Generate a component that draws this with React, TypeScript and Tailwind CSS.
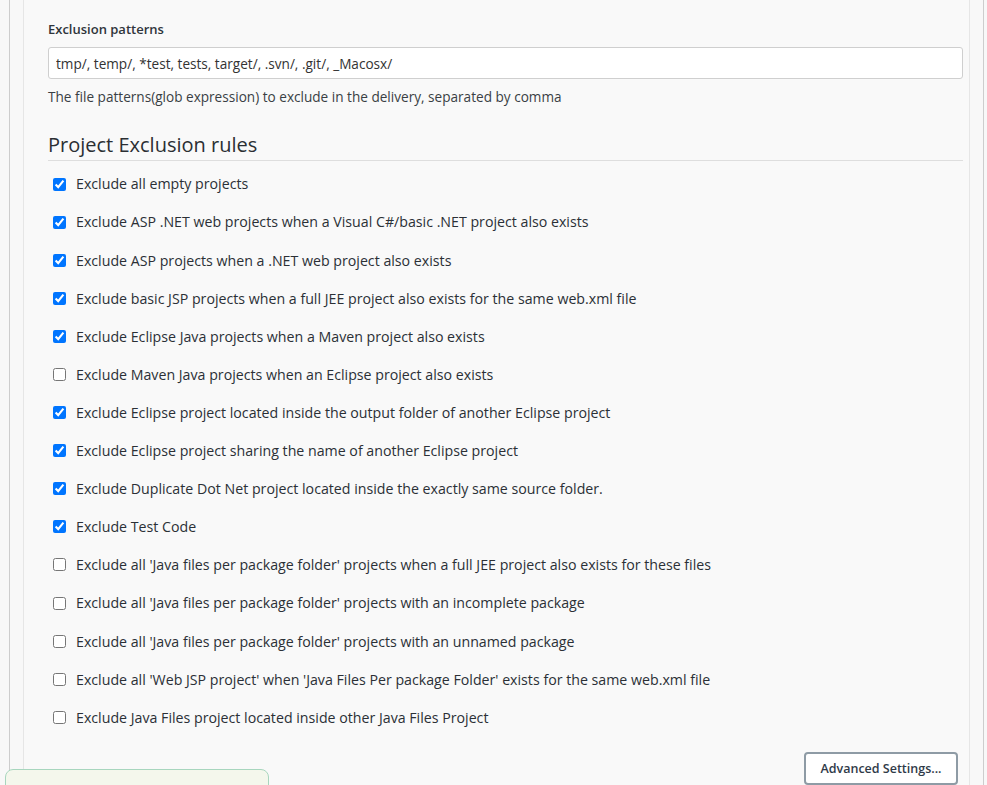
import React from "react";

const rules: { label: string; checked: boolean }[] = [
  { label: "Exclude all empty projects", checked: true },
  { label: "Exclude ASP .NET web projects when a Visual C#/basic .NET project also exists", checked: true },
  { label: "Exclude ASP projects when a .NET web project also exists", checked: true },
  { label: "Exclude basic JSP projects when a full JEE project also exists for the same web.xml file", checked: true },
  { label: "Exclude Eclipse Java projects when a Maven project also exists", checked: true },
  { label: "Exclude Maven Java projects when an Eclipse project also exists", checked: false },
  { label: "Exclude Eclipse project located inside the output folder of another Eclipse project", checked: true },
  { label: "Exclude Eclipse project sharing the name of another Eclipse project", checked: true },
  { label: "Exclude Duplicate Dot Net project located inside the exactly same source folder.", checked: true },
  { label: "Exclude Test Code", checked: true },
  { label: "Exclude all 'Java files per package folder' projects when a full JEE project also exists for these files", checked: false },
  { label: "Exclude all 'Java files per package folder' projects with an incomplete package", checked: false },
  { label: "Exclude all 'Java files per package folder' projects with an unnamed package", checked: false },
  { label: "Exclude all 'Web JSP project' when 'Java Files Per package Folder' exists for the same web.xml file", checked: false },
  { label: "Exclude Java Files project located inside other Java Files Project", checked: false },
];

export default function App() {
  return (
    <div
      className="min-h-screen bg-[#f8f8f8] pl-[9px] pr-[3px] text-[#333a40] overflow-hidden"
      style={{ fontFamily: '"Open Sans", "Noto Sans", sans-serif' }}
    >
      <div className="border-l border-r border-[#cdcdcd] px-[13px]">
        <div className="border-l border-r border-[#e6e6e6] bg-[#f9f9f9] pl-[24px] pr-[6px] pt-[20px] pb-[20px]">
          <label className="block text-[13px] font-semibold text-[#2f353b] leading-[18px]">
            Exclusion patterns
          </label>
          <input
            type="text"
            defaultValue="tmp/, temp/, *test, tests, target/, .svn/, .git/, _Macosx/"
            className="mt-[9px] block w-full h-[32px] bg-white border border-[#cfcfcf] rounded-[3px] px-[7px] text-[13.6px] text-[#333] outline-none"
          />
          <p className="mt-[9px] text-[13.6px] leading-[18px] text-[#3a3f44]">
            The file patterns(glob expression) to exclude in the delivery, separated by comma
          </p>
          <h2 className="mt-[25px] pb-[1px] border-b border-[#dedede] text-[20px] leading-[28px] text-[#2b2f33]">
            Project Exclusion rules
          </h2>
          <div className="mt-[4px] flex flex-col">
            {rules.map((r) => (
              <label key={r.label} className="flex items-center h-[38.1px] pl-[5px]">
                <input type="checkbox" defaultChecked={r.checked} className="w-[13px] h-[13px] m-0" />
                <span className="ml-[10px] text-[14.2px] font-medium text-[#2b3036]">{r.label}</span>
              </label>
            ))}
          </div>
          <div className="mt-[16px] flex justify-end pr-[5px]">
            <button className="w-[154px] h-[33px] border-2 border-[#8e9ba5] rounded-[4px] bg-white text-[12.5px] font-semibold text-[#2f3a48]">
              Advanced Settings...
            </button>
          </div>
        </div>
      </div>
      <div className="fixed left-[5px] top-[769px] w-[264px] h-[40px] border border-[#a8d6be] bg-[#f4f7ec] rounded-[8px]" />
    </div>
  );
}
